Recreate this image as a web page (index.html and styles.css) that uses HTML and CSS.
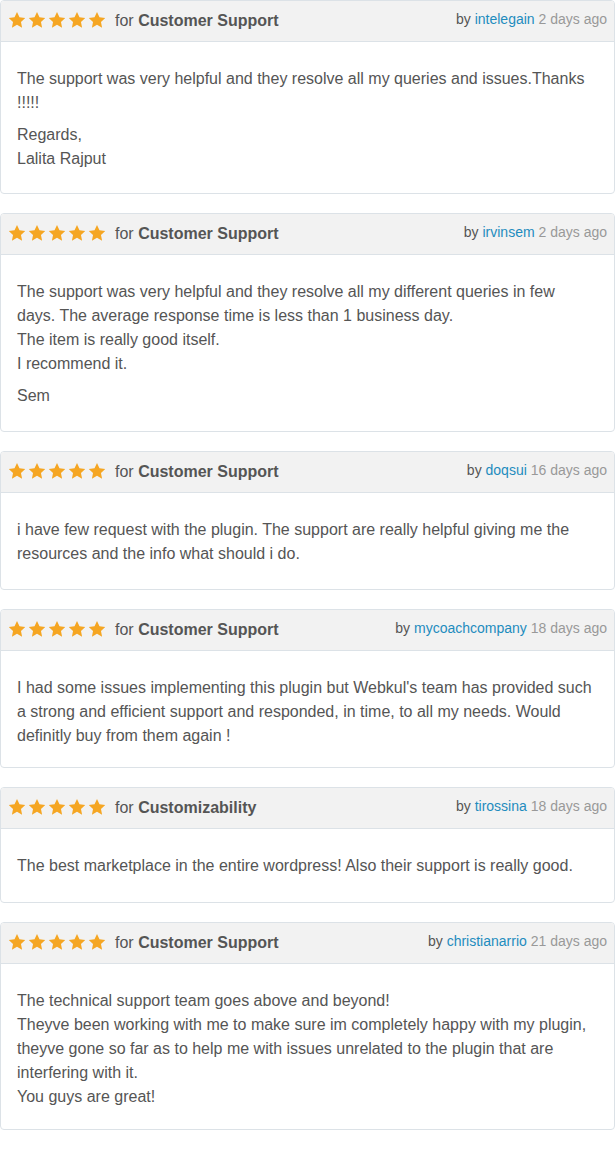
FILE: index.html
```html
<!DOCTYPE html>
<html lang="en">
<head>
<meta charset="utf-8">
<title>Reviews</title>
<link rel="stylesheet" href="styles.css">
</head>
<body>
<svg width="0" height="0" class="defs" aria-hidden="true">
  <defs>
    <symbol id="star" viewBox="0 0 24 24">
      <path d="M12 1.2l3.3 7.1 7.7.9-5.7 5.3 1.5 7.7L12 18.4l-6.8 3.8 1.5-7.7L1 9.2l7.7-.9z" fill="#f5a623"/>
    </symbol>
  </defs>
</svg>
<div class="reviews">

  <div class="card">
    <div class="head">
      <div class="rating">
        <span class="stars"><svg><use href="#star"/></svg><svg><use href="#star"/></svg><svg><use href="#star"/></svg><svg><use href="#star"/></svg><svg><use href="#star"/></svg></span>
        <span class="for">for <b>Customer Support</b></span>
      </div>
      <div class="meta">by <a class="user">intelegain</a> <span class="time">2 days ago</span></div>
    </div>
    <div class="body body-first">
      <p>The support was very helpful and they resolve all my queries and issues.Thanks !!!!!</p>
      <p>Regards,<br>Lalita Rajput</p>
    </div>
  </div>

  <div class="card">
    <div class="head">
      <div class="rating">
        <span class="stars"><svg><use href="#star"/></svg><svg><use href="#star"/></svg><svg><use href="#star"/></svg><svg><use href="#star"/></svg><svg><use href="#star"/></svg></span>
        <span class="for">for <b>Customer Support</b></span>
      </div>
      <div class="meta">by <a class="user">irvinsem</a> <span class="time">2 days ago</span></div>
    </div>
    <div class="body">
      <p>The support was very helpful and they resolve all my different queries in few<br>days. The average response time is less than 1 business day.<br>The item is really good itself.<br>I recommend it.</p>
      <p>Sem</p>
    </div>
  </div>

  <div class="card">
    <div class="head">
      <div class="rating">
        <span class="stars"><svg><use href="#star"/></svg><svg><use href="#star"/></svg><svg><use href="#star"/></svg><svg><use href="#star"/></svg><svg><use href="#star"/></svg></span>
        <span class="for">for <b>Customer Support</b></span>
      </div>
      <div class="meta">by <a class="user">doqsui</a> <span class="time">16 days ago</span></div>
    </div>
    <div class="body">
      <p>i have few request with the plugin. The support are really helpful giving me the resources and the info what should i do.</p>
    </div>
  </div>

  <div class="card">
    <div class="head">
      <div class="rating">
        <span class="stars"><svg><use href="#star"/></svg><svg><use href="#star"/></svg><svg><use href="#star"/></svg><svg><use href="#star"/></svg><svg><use href="#star"/></svg></span>
        <span class="for">for <b>Customer Support</b></span>
      </div>
      <div class="meta">by <a class="user">mycoachcompany</a> <span class="time">18 days ago</span></div>
    </div>
    <div class="body body-tight">
      <p>I had some issues implementing this plugin but Webkul's team has provided such a strong and efficient support and responded, in time, to all my needs. Would definitly buy from them again !</p>
    </div>
  </div>

  <div class="card">
    <div class="head">
      <div class="rating">
        <span class="stars"><svg><use href="#star"/></svg><svg><use href="#star"/></svg><svg><use href="#star"/></svg><svg><use href="#star"/></svg><svg><use href="#star"/></svg></span>
        <span class="for">for <b>Customizability</b></span>
      </div>
      <div class="meta">by <a class="user">tirossina</a> <span class="time">18 days ago</span></div>
    </div>
    <div class="body body-loose">
      <p>The best marketplace in the entire wordpress! Also their support is really good.</p>
    </div>
  </div>

  <div class="card">
    <div class="head">
      <div class="rating">
        <span class="stars"><svg><use href="#star"/></svg><svg><use href="#star"/></svg><svg><use href="#star"/></svg><svg><use href="#star"/></svg><svg><use href="#star"/></svg></span>
        <span class="for">for <b>Customer Support</b></span>
      </div>
      <div class="meta">by <a class="user">christianarrio</a> <span class="time">21 days ago</span></div>
    </div>
    <div class="body body-snug">
      <p>The technical support team goes above and beyond!<br>Theyve been working with me to make sure im completely happy with my plugin, theyve gone so far as to help me with issues unrelated to the plugin that are interfering with it.<br>You guys are great!</p>
    </div>
  </div>

</div>
</body>
</html>
```
FILE: styles.css
```css
* { box-sizing: border-box; }
html, body { margin: 0; padding: 0; background: #fff; }
body {
  font-family: "Liberation Sans", Arial, sans-serif;
  color: #555;
}
.defs { position: absolute; width: 0; height: 0; overflow: hidden; }
.reviews {
  display: flex;
  flex-direction: column;
  gap: 19px;
  width: 615px;
}
.card {
  border: 1px solid #dce2e7;
  border-radius: 4px;
  overflow: hidden;
  background: #fff;
}
.head {
  display: flex;
  justify-content: space-between;
  align-items: center;
  height: 41px;
  padding: 0 7px 0 7px;
  background: #f2f2f2;
  border-bottom: 1px solid #dce2e7;
}
.rating { display: flex; align-items: center; }
.stars { display: flex; gap: 2px; margin-top: -2px; }
.stars svg { width: 18px; height: 18px; display: block; }
.for { font-size: 16px; color: #555; margin-left: 9px; }
.for b { font-weight: bold; color: #555; }
.meta { font-size: 14px; color: #555; margin-top: -4px; }
.user { color: #1e8cbe; text-decoration: none; }
.time { color: #999; }
.body {
  padding: 25px 16px 23px 16px;
  font-size: 16px;
  line-height: 24px;
  color: #555;
}
.body-first { padding-bottom: 22px; }
.body-tight { padding-bottom: 19px; }
.body-loose { padding-bottom: 24px; }
.body-snug { padding-bottom: 20px; }
.body p { margin: 0; }
.body p + p { margin-top: 8px; }
```
